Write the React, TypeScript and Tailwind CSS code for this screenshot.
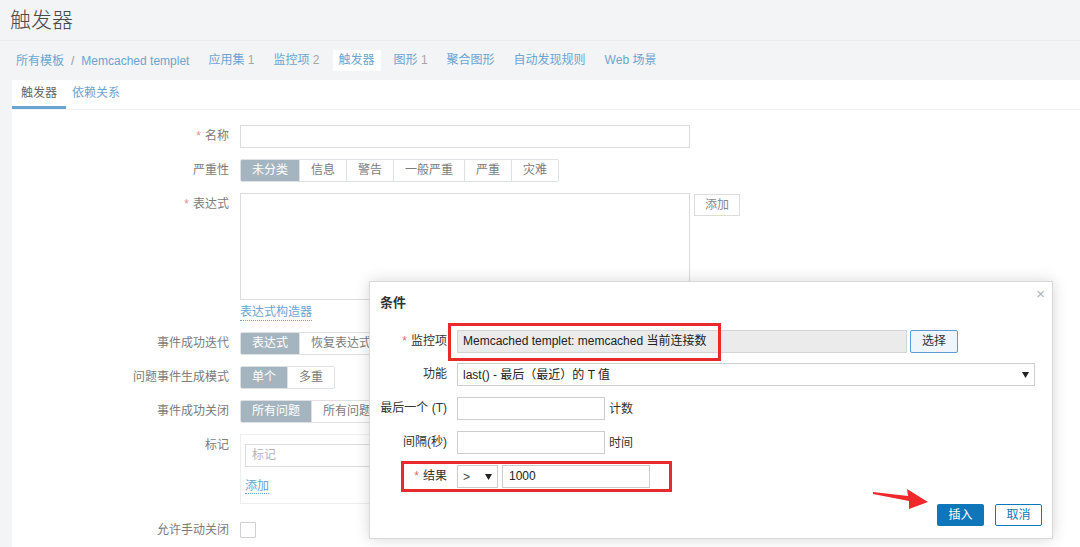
import React from 'react';

const FONT = "font-['Liberation_Sans','Noto_Sans_CJK_SC',sans-serif]";

const Caret = () => (
    <svg width="7" height="6" viewBox="0 0 7 6" className="shrink-0">
        <path d="M0 0 L7 0 L3.5 6 Z" fill="#222" />
    </svg>
);

interface RowProps {
    label: string;
    required?: boolean;
    className?: string;
    children: React.ReactNode;
}

const FormRow: React.FC<RowProps> = ({ label, required, className, children }) => (
    <div className={`flex gap-[11px] ${className ?? ''}`}>
        <div className="w-[217px] shrink-0 text-right leading-[23px] text-[#7b7b7b]">
            {required && <span className="text-[#ef8d8d] mr-[4px]">*</span>}
            {label}
        </div>
        <div className="flex items-start">{children}</div>
    </div>
);

const Segmented: React.FC<{ items: string[]; active: number }> = ({ items, active }) => (
    <div className="flex h-[23px] rounded-[2px] overflow-hidden border border-[#dde1e4] whitespace-nowrap">
        {items.map((item, i) => (
            <div
                key={item}
                className={`px-[11px] leading-[21px] ${i > 0 ? 'border-l border-[#dde1e4]' : ''} ${i === active ? 'bg-[#a5b5bf] text-white' : 'bg-white text-[#7b7b7b]'}`}
            >
                {item}
            </div>
        ))}
    </div>
);

const DialogRow: React.FC<RowProps> = ({ label, required, className, children }) => (
    <div className={`flex gap-[10px] ${className ?? ''}`}>
        <div className="w-[67px] shrink-0 flex justify-end whitespace-nowrap leading-[23px] text-[#333]">
            {required && <span className="text-[#e06a6a] mr-[4px]">*</span>}
            {label}
        </div>
        <div className="flex items-center">{children}</div>
    </div>
);

export default function App() {
    const nav = [
        { text: '应用集', count: '1' },
        { text: '监控项', count: '2' },
        { text: '触发器', active: true },
        { text: '图形', count: '1' },
        { text: '聚合图形' },
        { text: '自动发现规则' },
        { text: 'Web 场景' },
    ];

    return (
        <div className={`relative w-[1080px] h-[547px] overflow-hidden bg-[#f3f4f5] text-[12px] ${FONT}`}>
            {/* page title */}
            <div className="h-[41px] px-[10px] border-b border-[#e9ebed] flex items-center">
                <h1 className="text-[21px] font-light text-[#4a4a4a] leading-none -mt-[2px]">触发器</h1>
            </div>

            {/* breadcrumbs + nav */}
            <div className="h-[39px] flex items-center pl-[10px] gap-[7px] text-[#6aa5d2]">
                <div className="px-[6px] flex gap-[7px]">
                    <span>所有模板</span>
                    <span className="text-[#999]">/</span>
                    <span>Memcached templet</span>
                </div>
                {nav.map((n) => (
                    <div
                        key={n.text}
                        className={`px-[6px] leading-[21px] ${n.active ? 'bg-white text-[#6aa5d2]' : ''}`}
                    >
                        {n.text}
                        {n.count && <span className="text-[#a6a6a6]"> {n.count}</span>}
                    </div>
                ))}
            </div>

            {/* main panel */}
            <div className="ml-[12px] h-[467px] bg-white">
                <div className="flex h-[30px] border-b border-[#eef0f2]">
                    <div className="px-[9px] leading-[27px] border-b-[3px] border-[#6aa5d2] text-[#666]">触发器</div>
                    <div className="px-[6px] leading-[27px] text-[#6aa5d2]">依赖关系</div>
                </div>

                <div className="pt-[15px]">
                    <FormRow label="名称" required>
                        <div className="w-[450px] h-[23px] border border-[#dcdcdc]" />
                    </FormRow>

                    <FormRow label="严重性" className="mt-[11px]">
                        <Segmented items={['未分类', '信息', '警告', '一般严重', '严重', '灾难']} active={0} />
                    </FormRow>

                    <FormRow label="表达式" required className="mt-[11px]">
                        <div className="w-[450px] h-[107px] border border-[#dcdcdc]" />
                        <div className="ml-[4px] mt-[1px] h-[22px] px-[10px] leading-[20px] border border-[#dcdcdc] text-[#888]">添加</div>
                    </FormRow>

                    <div className="flex gap-[11px] mt-[4px]">
                        <div className="w-[217px] shrink-0" />
                        <span className="leading-[16px] text-[#6aa5d2] border-b border-dotted border-[#6aa5d2]">表达式构造器</span>
                    </div>

                    <FormRow label="事件成功迭代" className="mt-[11px]">
                        <Segmented items={['表达式', '恢复表达式', '无']} active={0} />
                    </FormRow>

                    <FormRow label="问题事件生成模式" className="mt-[11px]">
                        <Segmented items={['单个', '多重']} active={0} />
                    </FormRow>

                    <FormRow label="事件成功关闭" className="mt-[11px]">
                        <Segmented items={['所有问题', '所有问题如果标签值匹配']} active={0} />
                    </FormRow>

                    <FormRow label="标记" className="mt-[11px]">
                        <div className="w-[450px] h-[70px] border border-[#eceeef] px-[4px] pt-[9px]">
                            <div className="w-[300px] h-[23px] border border-[#dcdcdc] px-[6px] leading-[21px] text-[#b5b5b5]">标记</div>
                            <span className="inline-block mt-[12px] leading-[14px] text-[#6aa5d2] border-b border-dotted border-[#6aa5d2]">添加</span>
                        </div>
                    </FormRow>

                    <div className="flex gap-[11px] mt-[18px] items-center">
                        <div className="w-[217px] shrink-0 text-right leading-[16px] text-[#7b7b7b]">允许手动关闭</div>
                        <div className="w-[16px] h-[16px] border border-[#cfcfcf] rounded-[1px]" />
                    </div>
                </div>
            </div>

            {/* condition dialog */}
            <div className="absolute left-[369px] top-[281px] w-[684px] bg-white border border-[#d8d8d8] shadow-[0_0_14px_rgba(0,0,0,0.16)] px-[10px] pt-[12px] pb-[12px]">
                <div className="absolute right-[7px] top-[4px] text-[15px] leading-none text-[#b0b0b0]">×</div>
                <h4 className="font-bold text-[13px] leading-[18px] text-[#333]">条件</h4>

                <DialogRow label="监控项" required className="mt-[18px]">
                    <div className="w-[450px] h-[23px] bg-[#ebebeb] border border-[#d4d4d4] px-[5px] leading-[21px] text-[#222]">
                        Memcached templet: memcached 当前连接数
                    </div>
                    <div className="ml-[3px] w-[48px] h-[23px] border border-[#5a9bd5] rounded-[2px] bg-[#eef5fc] text-center leading-[21px] text-[#333]">选择</div>
                </DialogRow>

                <DialogRow label="功能" className="mt-[10px]">
                    <div className="w-[578px] h-[23px] border border-[#cdcdcd] px-[5px] flex items-center justify-between text-[#222]">
                        <span>last() - 最后（最近）的 T 值</span>
                        <Caret />
                    </div>
                </DialogRow>

                <DialogRow label="最后一个 (T)" className="mt-[11px]">
                    <div className="w-[148px] h-[23px] border border-[#cdcdcd]" />
                    <span className="ml-[4px] text-[#333]">计数</span>
                </DialogRow>

                <DialogRow label="间隔(秒)" className="mt-[11px]">
                    <div className="w-[148px] h-[23px] border border-[#cdcdcd]" />
                    <span className="ml-[4px] text-[#333]">时间</span>
                </DialogRow>

                <DialogRow label="结果" required className="mt-[11px]">
                    <div className="w-[41px] h-[23px] border border-[#cdcdcd] px-[5px] flex items-center justify-between text-[#444]">
                        <span>&gt;</span>
                        <Caret />
                    </div>
                    <div className="ml-[4px] w-[148px] h-[23px] border border-[#cdcdcd] px-[6px] leading-[21px] text-[#222]">1000</div>
                </DialogRow>

                <div className="flex justify-end gap-[11px] mt-[16px]">
                    <div className="w-[47px] h-[22px] rounded-[2px] bg-[#0f77b9] text-white text-center leading-[22px]">插入</div>
                    <div className="w-[47px] h-[22px] rounded-[2px] border border-[#0f77b9] text-[#0f77b9] text-center leading-[20px]">取消</div>
                </div>

                {/* annotation boxes */}
                <div className="absolute left-[78px] top-[41px] w-[273px] h-[38px] border-[3px] border-[#e8292d]" />
                <div className="absolute left-[31px] top-[179px] w-[271px] h-[31px] border-[3px] border-[#e8292d]" />
            </div>

            {/* annotation arrow */}
            <svg className="absolute left-0 top-0" width="1080" height="547" viewBox="0 0 1080 547">
                <polygon points="873,492 908,496 907,489 928,502 909,509 909,501 873,494" fill="#f0282c" />
            </svg>
        </div>
    );
}
